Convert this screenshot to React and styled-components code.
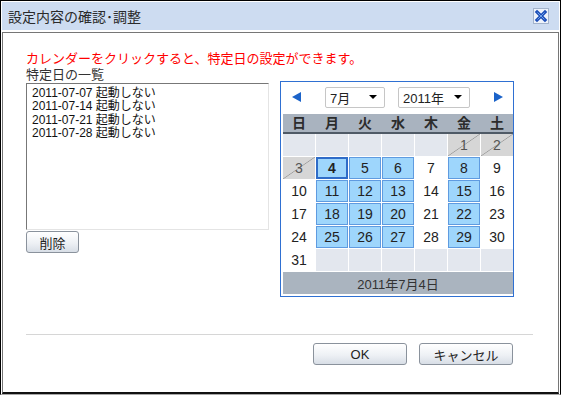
import React from 'react';
import styled, { createGlobalStyle, css } from 'styled-components';

const GlobalStyle = createGlobalStyle`
  html, body {
    margin: 0;
    padding: 0;
    background: #fff;
  }
  body {
    font-family: "Liberation Sans", "Noto Sans CJK JP", sans-serif;
    color: #333;
  }
`;

const specialDays = [
    { date: '2011-07-07', label: '起動しない' },
    { date: '2011-07-14', label: '起動しない' },
    { date: '2011-07-21', label: '起動しない' },
    { date: '2011-07-28', label: '起動しない' },
];

const weekdays = ['日', '月', '火', '水', '木', '金', '土'];

// July 2011 starts on a Friday; days before the 4th can't be chosen
const buildCells = () => {
    const cells = [];
    for (let i = 0; i < 5; i++) cells.push({ kind: 'blank' });
    for (let d = 1; d <= 31; d++) {
        const dow = (d + 4) % 7;
        let kind = 'plain';
        if (d < 4) kind = 'off';
        else if (d === 4) kind = 'today';
        else if ([1, 2, 3, 5].includes(dow)) kind = 'mark';
        cells.push({ kind, day: d });
    }
    while (cells.length < 42) cells.push({ kind: 'blank' });
    return cells;
};

const CloseIcon = () => (
    <svg width="16" height="16" viewBox="0 0 16 16">
        <rect x="0.5" y="0.5" width="15" height="15" fill="#eef3fb" stroke="#a3b3cb" />
        <path d="M4 4 L12 12 M12 4 L4 12" stroke="#1d4fb8" strokeWidth="3.2" strokeLinecap="square" />
        <path d="M4.5 4.5 L11.5 11.5 M11.5 4.5 L4.5 11.5" stroke="#6f9fe8" strokeWidth="1" />
    </svg>
);

const Arrow = ({ dir }) => (
    <svg width="9" height="10" viewBox="0 0 9 10">
        <polygon points={dir === 'left' ? '9,0 9,10 0,5' : '0,0 0,10 9,5'} fill="#1b63c9" />
    </svg>
);

const App = () => {
    const cells = buildCells();
    return (
        <>
            <GlobalStyle />
            <Window>
                <TitleBar>
                    <Title>設定内容の確認･調整</Title>
                    <CloseIcon />
                </TitleBar>
                <Body>
                    <Notice>カレンダーをクリックすると、特定日の設定ができます。</Notice>
                    <Row>
                        <LeftCol>
                            <Label>特定日の一覧</Label>
                            <ListBox>
                                {specialDays.map(s => (
                                    <ListItem key={s.date}>{s.date} {s.label}</ListItem>
                                ))}
                            </ListBox>
                            <Button $w={53}>削除</Button>
                        </LeftCol>
                        <Calendar>
                            <Nav>
                                <Arrow dir="left" />
                                <Selects>
                                    <Select $w={60}>7月<Caret /></Select>
                                    <Select $w={72}>2011年<Caret /></Select>
                                </Selects>
                                <Arrow dir="right" />
                            </Nav>
                            <WeekHeader>
                                {weekdays.map(w => <WeekDay key={w}>{w}</WeekDay>)}
                            </WeekHeader>
                            <DayGrid>
                                {cells.map((c, i) => (
                                    <Day key={i} $kind={c.kind}>{c.day}</Day>
                                ))}
                            </DayGrid>
                            <Footer>2011年7月4日</Footer>
                        </Calendar>
                    </Row>
                    <Separator />
                    <Actions>
                        <Button $w={94}>OK</Button>
                        <Button $w={94}>キャンセル</Button>
                    </Actions>
                </Body>
            </Window>
        </>
    );
};

export default App;

const Window = styled.div`
    box-sizing: border-box;
    width: 561px;
    height: 395px;
    border: 1px solid #000;
    border-bottom-color: #a8a8a8;
    padding: 1px 1px 0 1px;
    display: flex;
    flex-direction: column;
    background: #fff;
`;

const TitleBar = styled.div`
    height: 28px;
    flex-shrink: 0;
    background: #cddcf1;
    display: flex;
    align-items: center;
    justify-content: space-between;
    padding: 0 10px 0 6px;
    margin-bottom: 2px;
`;

const Title = styled.span`
    font-size: 14px;
    color: #2a2a2a;
`;

const Body = styled.div`
    flex: 1;
    border: 1px solid #767676;
    border-bottom: 2px solid #111;
    padding: 18px 25px 0 23px;
    display: flex;
    flex-direction: column;
`;

const Notice = styled.div`
    color: #ff0000;
    font-size: 13px;
    line-height: 15px;
`;

const Row = styled.div`
    display: flex;
    align-items: flex-start;
    gap: 11px;
`;

const LeftCol = styled.div`
    width: 243px;
    display: flex;
    flex-direction: column;
    align-items: flex-start;
`;

const Label = styled.div`
    font-size: 13px;
    line-height: 17px;
    color: #333;
`;

const ListBox = styled.div`
    box-sizing: border-box;
    width: 243px;
    height: 147px;
    border: 1px solid #e4e4e4;
    border-top-color: #777;
    border-left-color: #777;
    padding: 3px 5px;
    margin-bottom: 1px;
`;

const ListItem = styled.div`
    font-size: 12px;
    line-height: 13.4px;
    color: #111;
    white-space: nowrap;
`;

const Button = styled.div`
    box-sizing: border-box;
    width: ${p => p.$w}px;
    height: 22px;
    border: 1px solid #8a929c;
    border-radius: 3px;
    background: linear-gradient(#ffffff, #eef1f5 55%, #d8dee6);
    display: flex;
    align-items: center;
    justify-content: center;
    font-size: 13px;
    color: #222;
`;

const Calendar = styled.div`
    box-sizing: border-box;
    width: 234px;
    margin-top: 15px;
    border: 1px solid #2f70d2;
    padding: 0 0 2px 2px;
    display: flex;
    flex-direction: column;
`;

const Nav = styled.div`
    height: 32px;
    display: flex;
    align-items: center;
    justify-content: space-between;
    padding: 0 10px 2px 9px;
    box-sizing: border-box;
`;

const Selects = styled.div`
    display: flex;
    gap: 13px;
`;

const Select = styled.div`
    box-sizing: border-box;
    width: ${p => p.$w}px;
    height: 21px;
    border: 1px solid #c6c6c6;
    border-radius: 2px;
    background: #fff;
    display: flex;
    align-items: center;
    justify-content: space-between;
    padding: 0 7px 0 4px;
    font-size: 13px;
    color: #222;
`;

const Caret = styled.span`
    width: 0;
    height: 0;
    border-left: 4px solid transparent;
    border-right: 4px solid transparent;
    border-top: 4px solid #000;
`;

const WeekHeader = styled.div`
    display: grid;
    grid-template-columns: repeat(7, 32px);
    column-gap: 1px;
    height: 18px;
    background: #a9b3bf;
    border-bottom: 2px solid #4f5a66;
`;

const WeekDay = styled.div`
    font-size: 14px;
    font-weight: bold;
    line-height: 18px;
    text-align: center;
    color: #2c2c2c;
`;

const DayGrid = styled.div`
    display: grid;
    grid-template-columns: repeat(7, 32px);
    grid-auto-rows: 22px;
    gap: 1px;
`;

const dayKinds = {
    blank: css`
        background: #e3e7ee;
    `,
    off: css`
        color: #555;
        background: linear-gradient(to bottom right, #d6d6d6 calc(50% - 0.7px), #9e9e9e 50%, #d6d6d6 calc(50% + 0.7px));
    `,
    plain: css`
        background: #fff;
    `,
    mark: css`
        background: #9ed6fc;
        border: 1px solid #5f9be0;
    `,
    today: css`
        background: #9ed6fc;
        border: 2px solid #2f6cc8;
        font-weight: bold;
    `,
};

const Day = styled.div`
    box-sizing: border-box;
    display: flex;
    align-items: center;
    justify-content: center;
    font-size: 14px;
    color: #222;
    ${p => dayKinds[p.$kind]}
`;

const Footer = styled.div`
    margin-top: 1px;
    width: 230px;
    height: 22px;
    background: #aab4bf;
    display: flex;
    align-items: center;
    justify-content: center;
    font-size: 13px;
    color: #333;
`;

const Separator = styled.div`
    height: 1px;
    background: #d6d6d6;
    margin-top: 37px;
`;

const Actions = styled.div`
    display: flex;
    justify-content: flex-end;
    gap: 12px;
    margin-top: 8px;
    padding-right: 20px;
`;
